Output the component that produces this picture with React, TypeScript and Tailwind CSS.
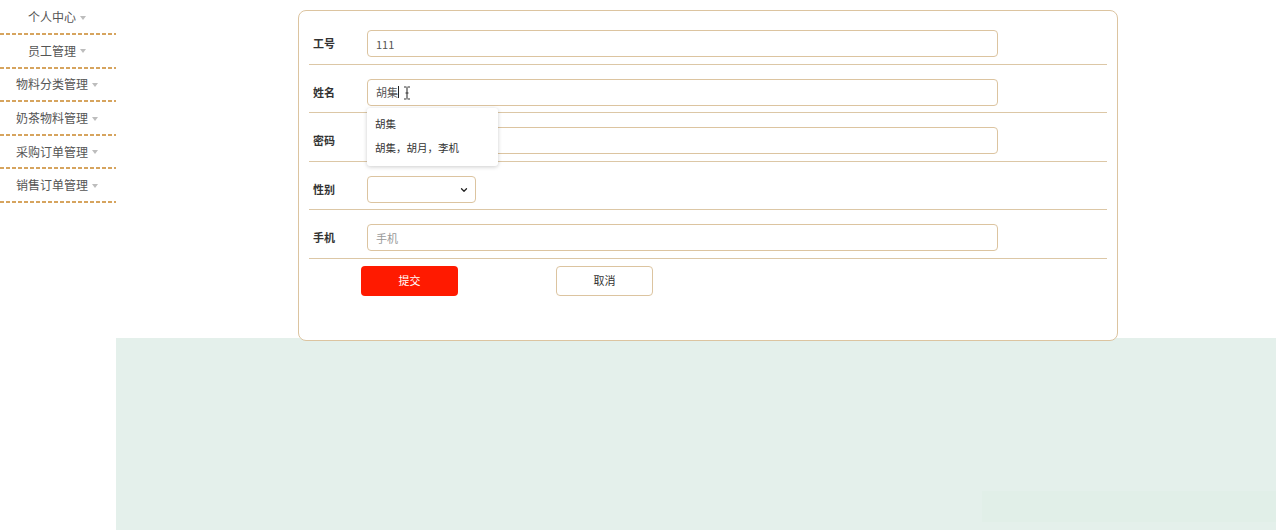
import React from 'react';
import { ChevronDown } from 'lucide-react';

const menuItems = ['个人中心', '员工管理', '物料分类管理', '奶茶物料管理', '采购订单管理', '销售订单管理'];

const font = { fontFamily: '"Noto Sans CJK SC", "Noto Sans", sans-serif' };

const Sidebar: React.FC = () => (
    <div className="w-[116px] shrink-0 pt-[1.5px]">
        {menuItems.map(item => (
            <div key={item}>
                <div className="h-[31.6px] flex items-center justify-center text-[12px] text-[#555] pr-[2px]">
                    <span>{item}</span>
                    <span className="ml-[4px] mt-[1px] w-0 h-0 border-l-[3.5px] border-r-[3.5px] border-t-[4px] border-l-transparent border-r-transparent border-t-[#bdbdbd]"></span>
                </div>
                <div className="h-[2px] bg-[linear-gradient(to_right,#d6a45e_4px,transparent_4px)] bg-[length:6px_2px] bg-repeat-x"></div>
            </div>
        ))}
    </div>
);

const FormRow: React.FC<{ label: string; children: React.ReactNode }> = ({ label, children }) => (
    <div className="flex items-center pt-[14px] pb-[6.5px] border-b border-[#dcc7a6]">
        <label className="w-[58px] pl-[4px] text-[11px] font-semibold text-[#333]">{label}</label>
        {children}
    </div>
);

const inputCls = 'h-[27px] w-[631px] rounded-[4px] border border-[#dcc4a0] bg-white px-[8px] text-[11px] text-[#555] placeholder:text-[#999] outline-none';

export default function App() {
    return (
        <div className="w-[1276px] h-[530px] bg-white flex overflow-hidden" style={font}>
            <Sidebar />
            <div className="flex-1 flex flex-col">
                <div className="pt-[10px] pl-[182px] relative z-10">
                    <div className="w-[820px] h-[331px] rounded-[8px] border border-[#dcc4a0] bg-white px-[10px] pt-[5px]">
                        <FormRow label="工号">
                            <input className={inputCls} defaultValue="111" />
                        </FormRow>
                        <FormRow label="姓名">
                            <div className="relative">
                                <div className={`${inputCls} flex items-center`}>
                                    <span>胡集</span>
                                    <span className="w-px h-[12px] bg-[#222]"></span>
                                    <svg width="8" height="14" viewBox="0 0 8 14" className="ml-[4px] mt-[2px]">
                                        <path d="M1 1h2.5M4.5 1H7M4 1.5v11M1 13h2.5M4.5 13H7M2.5 7h3" stroke="#333" strokeWidth="1.1" fill="none" />
                                    </svg>
                                </div>
                                <div className="absolute left-0 top-[29px] w-[131px] h-[58px] bg-white rounded-[3px] shadow-[0_1px_4px_rgba(0,0,0,0.2)] py-[4px] text-[10.5px] text-[#333] z-20">
                                    <div className="h-[24px] flex items-center pl-[8px]">胡集</div>
                                    <div className="h-[24px] flex items-center pl-[8px]">胡集，胡月，李机</div>
                                </div>
                            </div>
                        </FormRow>
                        <FormRow label="密码">
                            <input className={inputCls} type="password" />
                        </FormRow>
                        <FormRow label="性别">
                            <div className="relative w-[109px] h-[27px] rounded-[4px] border border-[#dcc4a0] bg-white">
                                <ChevronDown className="absolute right-[6px] top-[8px] w-[10px] h-[10px] text-[#222]" strokeWidth={3} />
                            </div>
                        </FormRow>
                        <FormRow label="手机">
                            <input className={inputCls} placeholder="手机" />
                        </FormRow>
                        <div className="flex pt-[7px] pl-[52px] gap-[98px]">
                            <button className="w-[97px] h-[30px] rounded-[4px] bg-[#ff1a00] text-white text-[11px]">提交</button>
                            <button className="w-[97px] h-[30px] rounded-[4px] border border-[#dcc4a0] bg-white text-[#333] text-[11px]">取消</button>
                        </div>
                    </div>
                </div>
                <div className="flex-1 -mt-[3px] bg-[#e4f0eb] flex flex-col justify-end pb-[8px]">
                    <div className="ml-auto w-[294px] h-[31px] bg-[#e1efe8]"></div>
                </div>
            </div>
        </div>
    );
}
